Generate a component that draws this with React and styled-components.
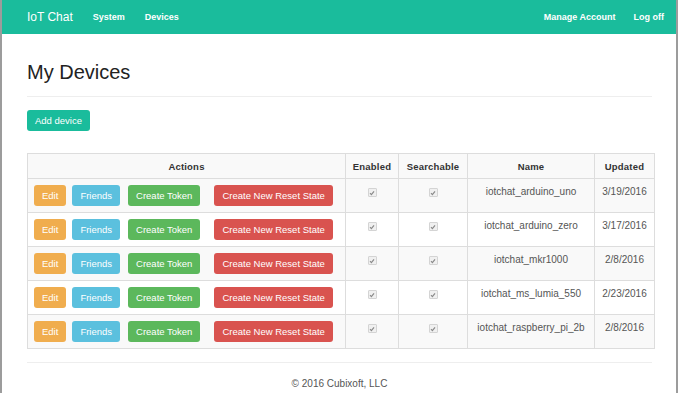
import React from "react";
import styled, { createGlobalStyle } from "styled-components";

const devices = [
  { name: "iotchat_arduino_uno", updated: "3/19/2016" },
  { name: "iotchat_arduino_zero", updated: "3/17/2016" },
  { name: "iotchat_mkr1000", updated: "2/8/2016" },
  { name: "iotchat_ms_lumia_550", updated: "2/23/2016" },
  { name: "iotchat_raspberry_pi_2b", updated: "2/8/2016" },
];

const Check = () => (
  <StCheck>
    <svg width="6" height="6" viewBox="0 0 6 6">
      <path d="M1 3.2 L2.4 4.6 L5 1.4" fill="none" stroke="#8a8a8a" strokeWidth="1.2" />
    </svg>
  </StCheck>
);

const App = () => {
  return (
    <>
      <GlobalStyle />
      <StFrame>
        <StNavbar>
          <StNavLeft>
            <StBrand>IoT Chat</StBrand>
            <StNavLink>System</StNavLink>
            <StNavLink>Devices</StNavLink>
          </StNavLeft>
          <StNavRight>
            <StNavLink>Manage Account</StNavLink>
            <StNavLink>Log off</StNavLink>
          </StNavRight>
        </StNavbar>
        <StContainer>
          <StTitle>My Devices</StTitle>
          <StRule />
          <div>
            <StButton $bg="#1abc9c">Add device</StButton>
          </div>
          <StTable>
            <colgroup>
              <col style={{ width: 318 }} />
              <col style={{ width: 53 }} />
              <col style={{ width: 69 }} />
              <col style={{ width: 127 }} />
              <col style={{ width: 60 }} />
            </colgroup>
            <thead>
              <tr>
                <StTh>Actions</StTh>
                <StTh>Enabled</StTh>
                <StTh>Searchable</StTh>
                <StTh>Name</StTh>
                <StTh>Updated</StTh>
              </tr>
            </thead>
            <tbody>
              {devices.map((d, i) => (
                <StRow key={d.name} $striped={i % 2 === 0}>
                  <StTd $left>
                    <StActions>
                      <StButton $bg="#f0ad4e">Edit</StButton>
                      <StButton $bg="#5bc0de" $space={1}>
                        Friends
                      </StButton>
                      <StButton $bg="#5cb85c" $space={3}>
                        Create Token
                      </StButton>
                      <StButton $bg="#d9534f" $space={9}>
                        Create New Reset State
                      </StButton>
                    </StActions>
                  </StTd>
                  <StTd>
                    <Check />
                  </StTd>
                  <StTd>
                    <Check />
                  </StTd>
                  <StTd>{d.name}</StTd>
                  <StTd>{d.updated}</StTd>
                </StRow>
              ))}
            </tbody>
          </StTable>
          <StRule $top={13} />
          <StFooter>© 2016 Cubixoft, LLC</StFooter>
        </StContainer>
      </StFrame>
    </>
  );
};

export default App;

const GlobalStyle = createGlobalStyle`
  body {
    margin: 0;
    background: #fff;
    font-family: "Liberation Sans", Arial, sans-serif;
    color: #333;
  }
`;

const StFrame = styled.div`
  width: 674px;
  height: 393px;
  border-left: 2px solid #9c9c9c;
  border-right: 2px solid #9c9c9c;
  overflow: hidden;
`;

const StNavbar = styled.nav`
  height: 34px;
  background: #1abc9c;
  display: flex;
  align-items: center;
  justify-content: space-between;
  padding: 0 12px 0 25px;
`;

const StNavLeft = styled.div`
  display: flex;
  align-items: center;
  gap: 20px;
`;

const StNavRight = styled.div`
  display: flex;
  align-items: center;
  gap: 18px;
`;

const StBrand = styled.span`
  color: #fff;
  font-size: 12px;
`;

const StNavLink = styled.span`
  color: #fff;
  font-size: 9px;
  font-weight: 700;
`;

const StContainer = styled.div`
  padding: 0 24px 0 25px;
`;

const StTitle = styled.h1`
  margin: 27px 0 0;
  font-size: 20px;
  font-weight: 400;
  line-height: 22px;
  color: #222;
`;

const StRule = styled.hr`
  border: 0;
  border-top: 1px solid #eee;
  margin: ${({ $top }) => $top ?? 13}px 0 13px;
`;

const StButton = styled.button`
  height: 21px;
  padding: 0 8px;
  border: 0;
  border-radius: 3px;
  background: ${({ $bg }) => $bg};
  color: #fff;
  font-family: "Liberation Sans", Arial, sans-serif;
  font-size: 9.5px;
  line-height: 21px;
  margin-left: ${({ $space }) => $space ?? 0}px;
  cursor: pointer;
`;

const StTable = styled.table`
  margin-top: 22px;
  width: 627px;
  table-layout: fixed;
  border-collapse: collapse;
  border: 1px solid #ddd;
  font-size: 10px;
`;

const StTh = styled.th`
  height: 24px;
  padding: 0 6px;
  border: 1px solid #ddd;
  background: #f9f9f9;
  font-size: 9.5px;
  font-weight: 700;
  color: #333;
  text-align: center;
  letter-spacing: 0.2px;
`;

const StRow = styled.tr`
  background: ${({ $striped }) => ($striped ? "#f9f9f9" : "#fff")};
`;

const StTd = styled.td`
  height: 20px;
  padding: 6px 7px 6px ${({ $left }) => ($left ? 6 : 7)}px;
  border: 1px solid #ddd;
  vertical-align: top;
  text-align: ${({ $left }) => ($left ? "left" : "center")};
  color: #555;
  line-height: 13px;
`;

const StActions = styled.div`
  display: flex;
  gap: 5px;
`;

const StCheck = styled.span`
  display: inline-flex;
  align-items: center;
  justify-content: center;
  width: 7px;
  height: 7px;
  margin-top: 3px;
  border: 1px solid #d4d4d4;
  border-radius: 1px;
  background: #f0f0f0;
`;

const StFooter = styled.footer`
  text-align: center;
  font-size: 10px;
  color: #555;
  margin-top: 15px;
`;
